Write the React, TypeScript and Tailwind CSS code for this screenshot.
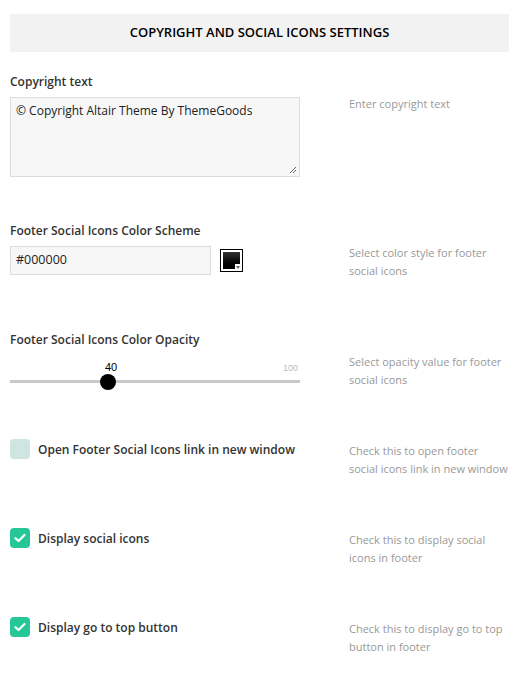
import React from "react";

const Check = ({ checked }: { checked: boolean }) =>
  checked ? (
    <div className="w-5 h-5 rounded-[4px] bg-[#26c797] flex items-center justify-center shrink-0">
      <svg width="12" height="10" viewBox="0 0 12 10" fill="none">
        <path d="M1.5 5.2 L4.5 8 L10.5 2" stroke="white" strokeWidth="2.2" strokeLinecap="round" strokeLinejoin="round" />
      </svg>
    </div>
  ) : (
    <div className="w-5 h-5 rounded-[4px] bg-[#cfe5df] shrink-0" />
  );

const Desc = ({ children, pt }: { children: React.ReactNode; pt: string }) => (
  <div className={`w-[162px] shrink-0 ml-[49px] text-[11px] leading-[18px] text-[#999] whitespace-nowrap ${pt}`}>{children}</div>
);

export default function App() {
  return (
    <div className="w-[515px] h-[680px] bg-white pl-[10px] pt-[14px] text-[#333] overflow-hidden" style={{ fontFamily: '"Open Sans", "Liberation Sans", sans-serif' }}>
      <div className="h-[38px] w-[499px] bg-[#f2f2f2] flex items-center justify-center text-[13px] font-semibold text-black">
        COPYRIGHT AND SOCIAL ICONS SETTINGS
      </div>

      {/* Copyright text */}
      <div className="flex mt-[22px]">
        <div className="w-[290px] shrink-0">
          <div className="text-[12px] font-semibold leading-[16px] text-[#333]">Copyright text</div>
          <div className="relative mt-[7px] h-[80px] border border-[#dcdcdc] bg-[#f7f7f7] px-[5px] py-[4px] text-[12px] leading-[18px] text-[#222]">
            © Copyright Altair Theme By ThemeGoods
            <svg className="absolute right-[2px] bottom-[2px]" width="8" height="8" viewBox="0 0 8 8">
              <path d="M7 1 L1 7 M7 4 L4 7" stroke="#666" strokeWidth="1" />
            </svg>
          </div>
        </div>
        <Desc pt="pt-[21px]">Enter copyright text</Desc>
      </div>

      {/* Color scheme */}
      <div className="flex mt-[46px]">
        <div className="w-[290px] shrink-0">
          <div className="text-[12px] font-semibold leading-[16px] text-[#333]">Footer Social Icons Color Scheme</div>
          <div className="flex items-center mt-[7px]">
            <div className="w-[201px] h-[29px] border border-[#dcdcdc] bg-[#f7f7f7] px-[5px] flex items-center text-[12.5px] text-[#222]">#000000</div>
            <div className="relative ml-[9px] w-[23px] h-[23px] border border-black bg-white p-[2px]">
              <div className="w-full h-full bg-gradient-to-b from-[#333] to-black" />
              <div className="absolute right-[1px] bottom-[1px] w-[6px] h-[6px] bg-white flex items-center justify-center">
                <div className="w-0 h-0 border-l-[2px] border-r-[2px] border-t-[3px] border-l-transparent border-r-transparent border-t-[#666]" />
              </div>
            </div>
          </div>
        </div>
        <Desc pt="pt-[21px]">
          Select color style for footer
          <br />
          social icons
        </Desc>
      </div>

      {/* Opacity */}
      <div className="flex mt-[52px]">
        <div className="w-[290px] shrink-0">
          <div className="text-[12px] font-semibold leading-[16px] text-[#333]">Footer Social Icons Color Opacity</div>
          <div className="relative h-[42px]">
            <div className="absolute left-[95px] top-[12px] text-[11px] leading-[14px] text-black" style={{ fontFamily: '"Liberation Sans", sans-serif' }}>40</div>
            <div className="absolute right-[2px] top-[14px] text-[9px] leading-[12px] text-[#bbb]" style={{ fontFamily: '"Liberation Sans", sans-serif' }}>100</div>
            <div className="absolute left-0 right-0 top-[32px] h-[3px] bg-[#c8c8c8]" />
            <div className="absolute left-[90px] top-[26px] w-[16px] h-[16px] rounded-full bg-black" />
          </div>
        </div>
        <Desc pt="pt-[21px]">
          Select opacity value for footer
          <br />
          social icons
        </Desc>
      </div>

      {/* Checkboxes */}
      {[
        { label: "Open Footer Social Icons link in new window", checked: false, desc: ["Check this to open footer", "social icons link in new window"], mt: "mt-[49px]" },
        { label: "Display social icons", checked: true, desc: ["Check this to display social", "icons in footer"], mt: "mt-[50px]" },
        { label: "Display go to top button", checked: true, desc: ["Check this to display go to top", "button in footer"], mt: "mt-[50px]" },
      ].map((r) => (
        <div key={r.label} className={`flex ${r.mt}`}>
          <div className="w-[290px] shrink-0 flex items-start">
            <Check checked={r.checked} />
            <div className="ml-[8px] pt-[1px] text-[12px] font-semibold leading-[20px] text-[#333] whitespace-nowrap">{r.label}</div>
          </div>
          <Desc pt="pt-[3px]">
            {r.desc[0]}
            <br />
            {r.desc[1]}
          </Desc>
        </div>
      ))}
    </div>
  );
}
